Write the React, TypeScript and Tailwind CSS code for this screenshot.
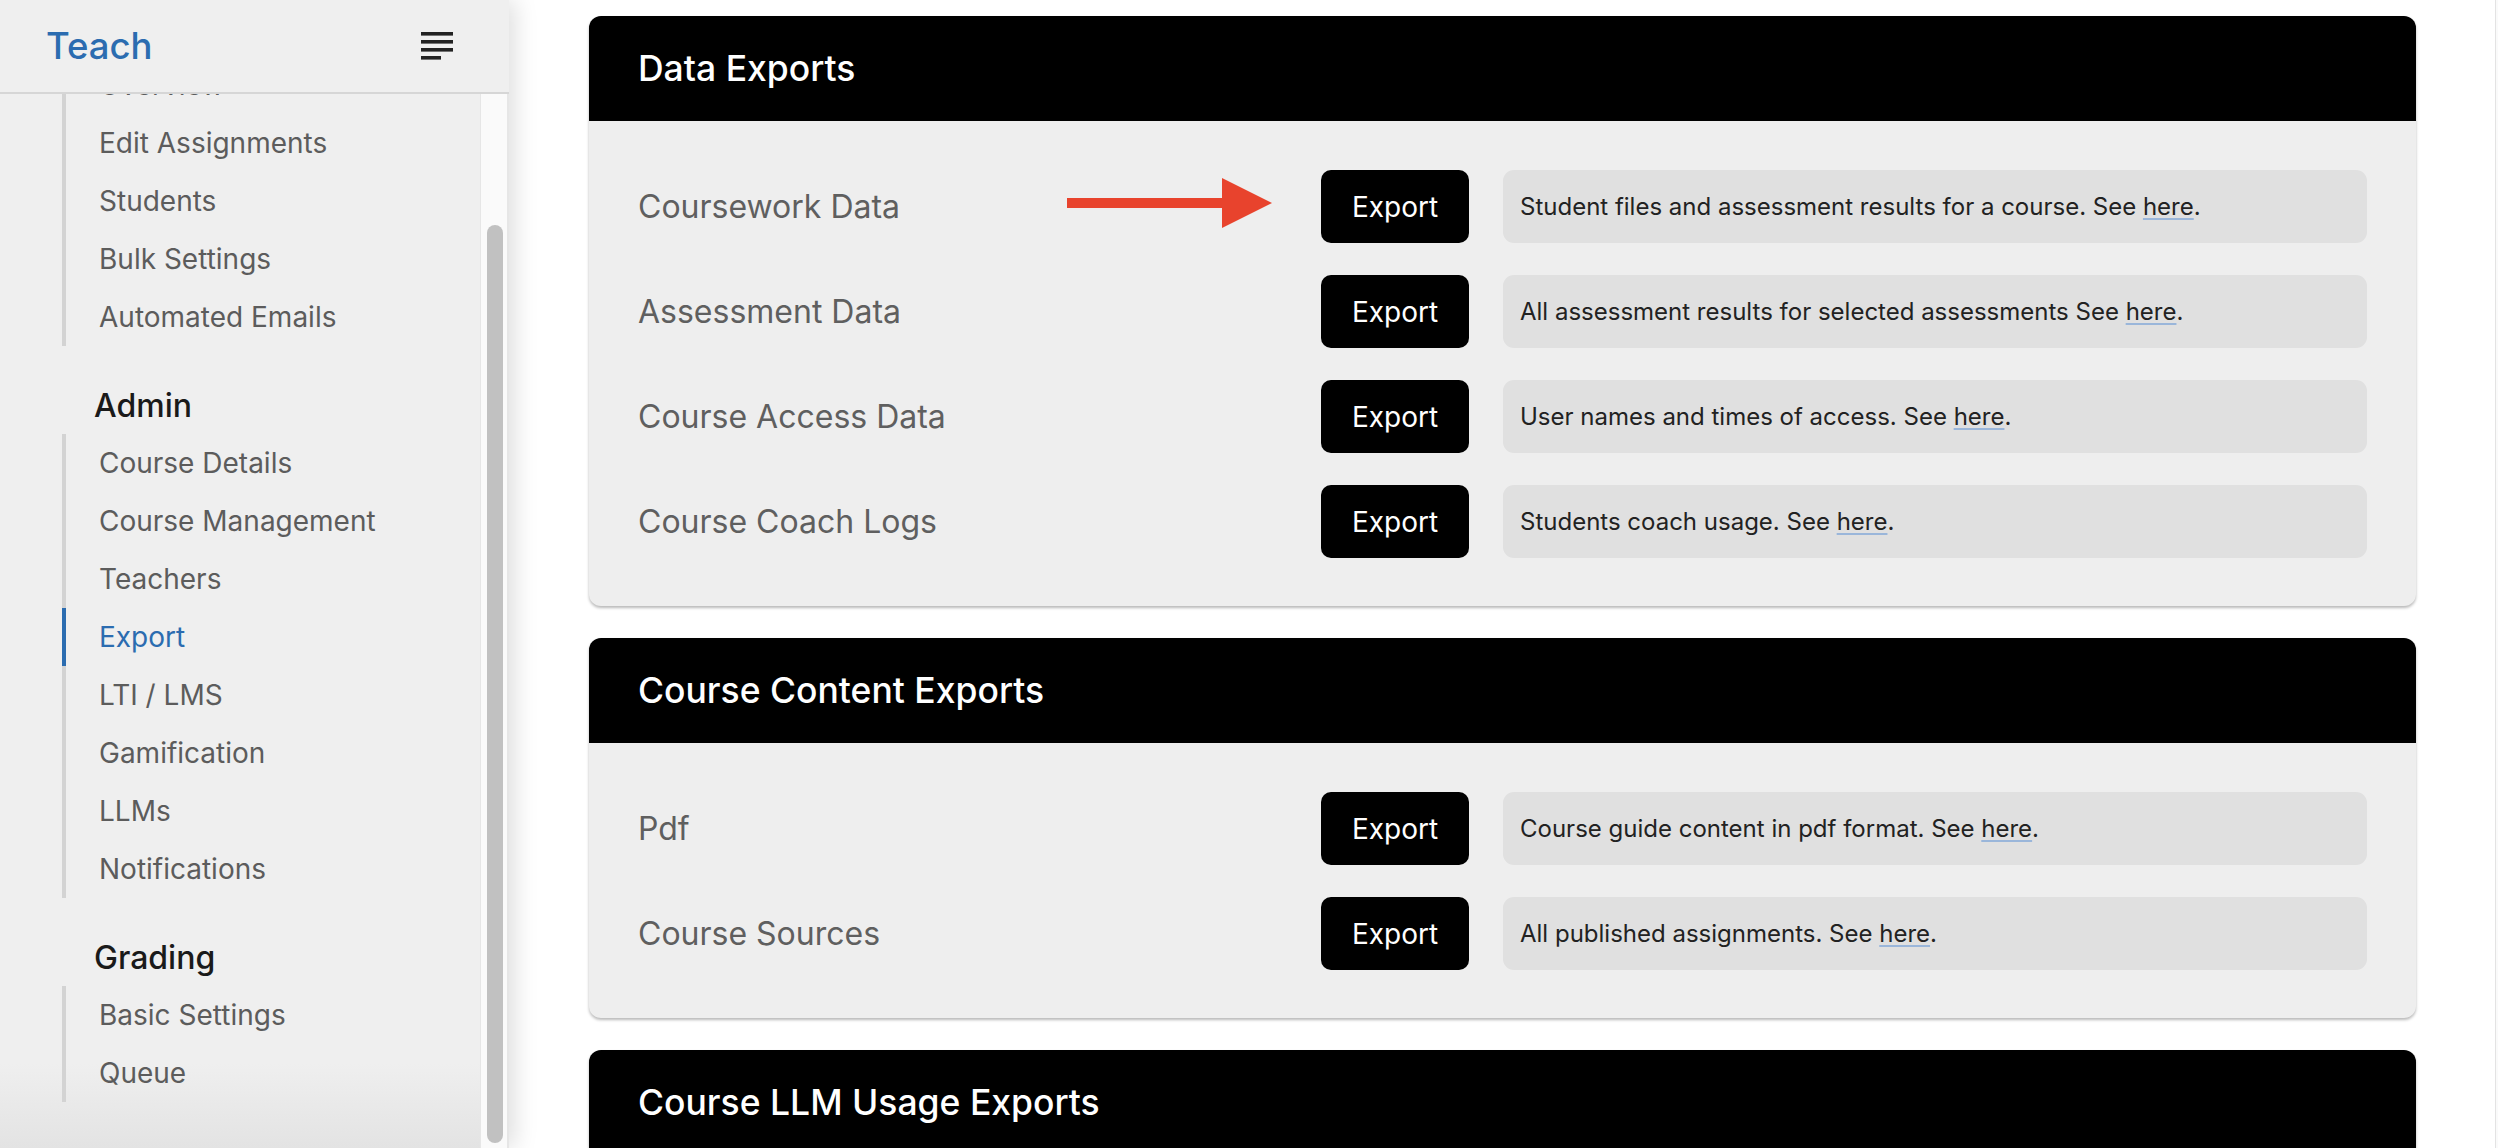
import React from "react";

type Item = { label: string; active?: boolean };

const groups: { heading?: string; items: Item[] }[] = [
  {
    items: [
      { label: "Overview" },
      { label: "Edit Assignments" },
      { label: "Students" },
      { label: "Bulk Settings" },
      { label: "Automated Emails" },
    ],
  },
  {
    heading: "Admin",
    items: [
      { label: "Course Details" },
      { label: "Course Management" },
      { label: "Teachers" },
      { label: "Export", active: true },
      { label: "LTI / LMS" },
      { label: "Gamification" },
      { label: "LLMs" },
      { label: "Notifications" },
    ],
  },
  {
    heading: "Grading",
    items: [{ label: "Basic Settings" }, { label: "Queue" }],
  },
];

type Row = { label: string; desc: string; arrow?: boolean };

const sections: { title: string; rows: Row[] }[] = [
  {
    title: "Data Exports",
    rows: [
      { label: "Coursework Data", desc: "Student files and assessment results for a course. See ", arrow: true },
      { label: "Assessment Data", desc: "All assessment results for selected assessments See " },
      { label: "Course Access Data", desc: "User names and times of access. See " },
      { label: "Course Coach Logs", desc: "Students coach usage. See " },
    ],
  },
  {
    title: "Course Content Exports",
    rows: [
      { label: "Pdf", desc: "Course guide content in pdf format. See " },
      { label: "Course Sources", desc: "All published assignments. See " },
    ],
  },
  {
    title: "Course LLM Usage Exports",
    rows: [{ label: "LLM Usage", desc: "LLM usage for the course. See " }],
  },
];

function MenuIcon() {
  return (
    <svg width="48" height="48" viewBox="0 0 24 24" fill="#222222">
      <rect x="4" y="5" width="16" height="1.8" />
      <rect x="4" y="9" width="16" height="1.8" />
      <rect x="4" y="13" width="16" height="1.8" />
      <rect x="4" y="17" width="10" height="1.8" />
    </svg>
  );
}

function Arrow() {
  return (
    <svg
      className="absolute left-[429px] top-[-13px]"
      width="205"
      height="50"
      viewBox="0 0 205 50"
    >
      <rect x="0" y="20" width="156" height="10" fill="#e8432d" />
      <polygon points="155,0 205,25 155,50" fill="#e8432d" />
    </svg>
  );
}

export default function App() {
  return (
    <div className="flex h-[1148px] w-full overflow-hidden bg-white font-['Inter',sans-serif]">
      {/* Sidebar */}
      <aside className="relative z-10 flex w-[509px] shrink-0 flex-col bg-[#efefef] shadow-[6px_0_22px_rgba(0,0,0,0.13)]">
        <div className="flex h-[94px] shrink-0 items-center justify-between border-b-2 border-[#d6d6d6] pl-[46px] pr-[48px]">
          <span className="text-[36.5px] font-medium leading-none text-[#2b6cb0]">
            Teach
          </span>
          <MenuIcon />
        </div>
        <div className="flex min-h-0 flex-1">
          <nav className="min-w-0 flex-1 overflow-hidden bg-[linear-gradient(to_bottom,#efefef_0%,#efefef_92%,#e3e3e3_100%)]">
            <div className="-mt-[38px]">
              {groups.map((g, gi) => (
                <div key={gi}>
                  {g.heading && (
                    <div className="mb-[8px] mt-[40px] flex h-[40px] items-center pl-[94px] text-[32px] font-medium leading-none text-[#1a1a1a]">
                      {g.heading}
                    </div>
                  )}
                  <ul className="ml-[62px]">
                    {g.items.map((it) => (
                      <li
                        key={it.label}
                        className={
                          it.active
                            ? "flex h-[58px] items-center border-l-4 border-[#2b6cb0] pl-[33px] text-[28px] leading-none text-[#2b6cb0]"
                            : "flex h-[58px] items-center border-l-4 border-[#d3d3d3] pl-[33px] text-[28px] leading-none text-[#5c5c5c]"
                        }
                      >
                        {it.label}
                      </li>
                    ))}
                  </ul>
                </div>
              ))}
            </div>
          </nav>
          <div className="w-[29px] shrink-0 border-l border-r-2 border-[#e6e6e6] bg-[#fafafa] pt-[131px]">
            <div className="ml-[6px] h-[918px] w-[16px] rounded-full bg-[#c1c1c1]" />
          </div>
        </div>
      </aside>

      {/* Main */}
      <main className="min-w-0 flex-1 pl-[80px] pr-[79px] pt-[16px]">
        <div className="flex flex-col gap-[32px]">
          {sections.map((s) => (
            <section
              key={s.title}
              className="overflow-hidden rounded-[12px] bg-[#eeeeee] shadow-[0_2px_3px_rgba(0,0,0,0.28)]"
            >
              <div className="flex h-[105px] items-center bg-black pl-[49px] text-[35.5px] font-medium leading-none text-white">
                {s.title}
              </div>
              <div className="flex flex-col gap-[32px] px-[49px] pb-[48px] pt-[49px]">
                {s.rows.map((r) => (
                  <div key={r.label} className="flex h-[73px] items-center">
                    <div className="relative w-[683px] shrink-0 text-[32px] leading-none text-[#5f5f5f]">
                      {r.label}
                      {r.arrow && <Arrow />}
                    </div>
                    <button className="flex h-[73px] w-[148px] shrink-0 items-center justify-center rounded-[10px] bg-black text-[28px] leading-none text-white">
                      Export
                    </button>
                    <div className="ml-[34px] flex h-[73px] flex-1 items-center rounded-[11px] bg-[#e0e0e0] pl-[17px] text-[24px] leading-none text-[#222222]">
                      <span>
                        {r.desc}
                        <span className="underline decoration-[#9ab6da] decoration-2 underline-offset-[3px]">
                          here
                        </span>
                        .
                      </span>
                    </div>
                  </div>
                ))}
              </div>
            </section>
          ))}
        </div>
      </main>
      <div className="w-[3px] shrink-0 border-l border-[#e3e3e3] bg-[#fafafa]" />
    </div>
  );
}
